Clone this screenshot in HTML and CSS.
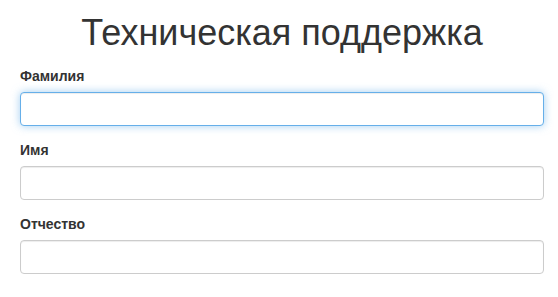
FILE: index.html
```html
<!DOCTYPE html>
<html>

<head>
    <meta charset='UTF-8'>
    <title>Техническая поддержка</title>
    <link rel="stylesheet" href="styles.css">
</head>

<body>
    <h1 class='title'>Техническая поддержка</h1>

    <form class='support-form'>
        <!-- Last name -->
        <div class='form-group'>
            <label for='last_name'>Фамилия</label>
            <input type='text' id='last_name' class='form-control is-focused'>
        </div>

        <!-- First name -->
        <div class='form-group'>
            <label for='first_name'>Имя</label>
            <input type='text' id='first_name' class='form-control'>
        </div>

        <!-- Middle name -->
        <div class='form-group'>
            <label for='middle_name'>Отчество</label>
            <input type='text' id='middle_name' class='form-control'>
        </div>
    </form>
</body>

</html>
```

FILE: styles.css
```css
body {
    font-family: "Liberation Sans", Arial, sans-serif;
    font-size: 14px;
    line-height: 1.42857;
    color: #333;
    background-color: #fff;
    margin: 0;
    padding: 0 14px 0 20px;
}

.title {
    text-align: center;
    font-size: 36px;
    font-weight: normal;
    line-height: 1.1;
    color: #333;
    margin: 13px 0 14px;
}

.support-form {
    margin: 0;
}

.form-group {
    margin-bottom: 15px;
}

label {
    display: block;
    font-weight: bold;
    margin-bottom: 5px;
}

.form-control {
    display: block;
    box-sizing: border-box;
    width: 100%;
    height: 34px;
    padding: 6px 12px;
    font-family: inherit;
    font-size: 14px;
    color: #555;
    background-color: #fff;
    border: 1px solid #ccc;
    border-radius: 4px;
    box-shadow: inset 0 1px 1px rgba(0, 0, 0, 0.075);
    outline: 0;
}

.form-control:focus,
.form-control.is-focused {
    border-color: #66afe9;
    box-shadow: inset 0 1px 1px rgba(0, 0, 0, 0.075), 0 0 8px rgba(102, 175, 233, 0.6);
}
```
